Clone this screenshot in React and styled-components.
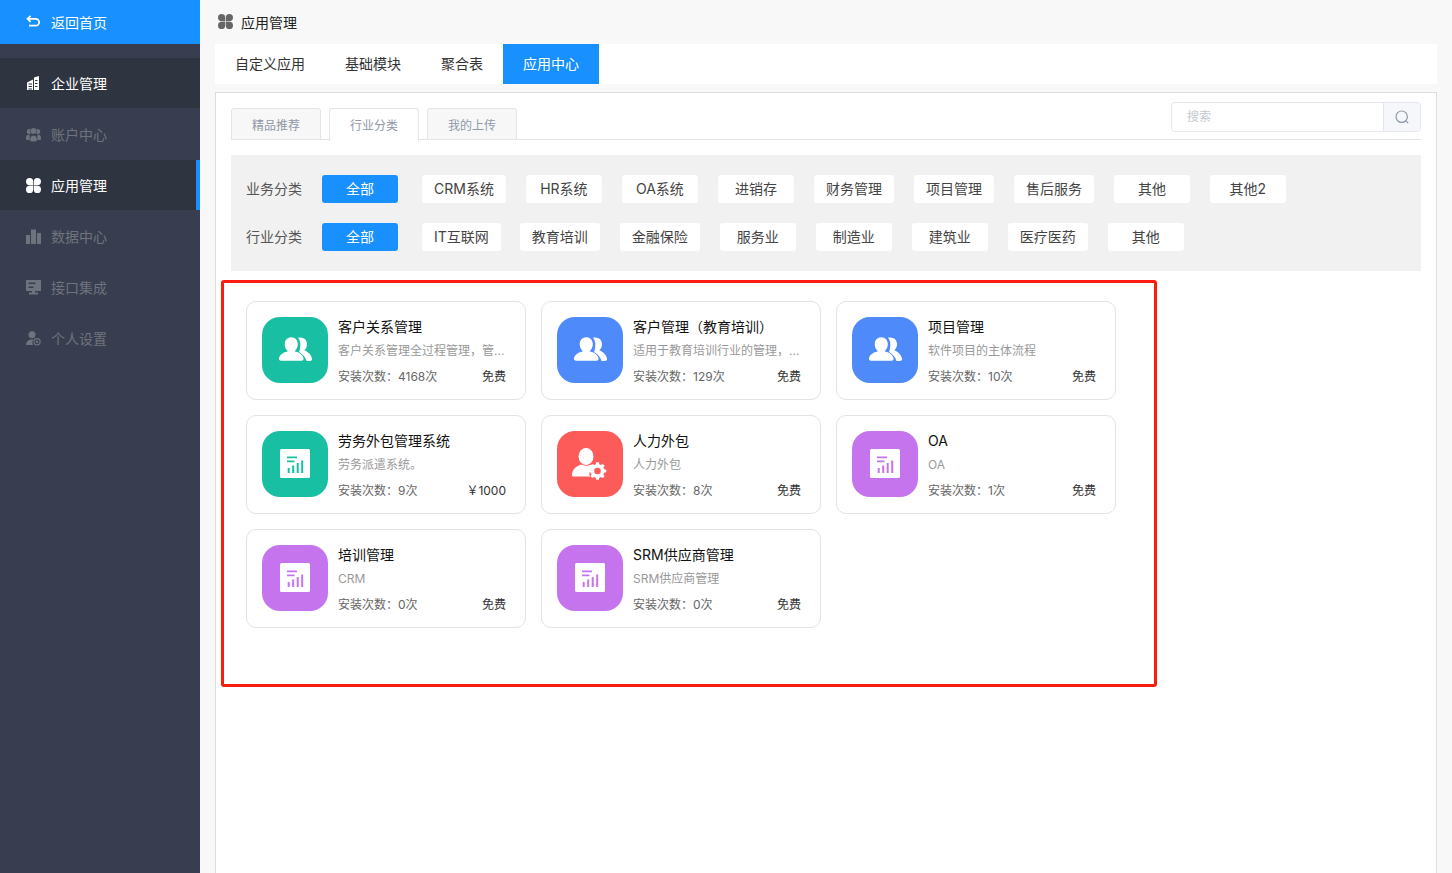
import React from 'react';
import styled, { createGlobalStyle } from 'styled-components';

const GlobalStyle = createGlobalStyle`
  * { box-sizing: border-box; }
  html, body { margin: 0; height: 100%; overflow: hidden; }
  body {
    background: #f8f8f8;
    font-family: Inter, "Noto Sans CJK SC", sans-serif;
    font-size: 14px;
  }
`;

const Page = styled.div`
  display: flex;
  height: 873px;
`;

const Sidebar = styled.aside`
  width: 200px;
  flex-shrink: 0;
  background: #383e4f;
`;

const BackRow = styled.div`
  height: 44px;
  margin-bottom: 14px;
  padding-left: 26px;
  display: flex;
  align-items: center;
  gap: 10px;
  background: #1890ff;
  color: #fff;
`;

const NavItem = styled.div`
  height: 50px;
  margin-bottom: 1px;
  padding-left: 26px;
  display: flex;
  align-items: center;
  gap: 10px;
  background: ${p => (p.$dark ? '#2f3441' : 'transparent')};
  color: ${p => (p.$dark ? '#fff' : '#6f737d')};
  border-right: 4px solid ${p => (p.$current ? '#1890ff' : 'transparent')};
`;

const Main = styled.main`
  flex: 1;
  min-width: 0;
  padding-left: 15px;
  padding-right: 15px;
`;

const Crumb = styled.div`
  height: 44px;
  display: flex;
  align-items: center;
  gap: 8px;
  padding-left: 3px;
  color: #222;
  svg { margin-top: -2px; }
`;

const TopTabs = styled.div`
  height: 40px;
  display: flex;
  background: #fff;
`;

const TopTab = styled.div`
  padding: 0 20px;
  line-height: 40px;
  color: ${p => (p.$active ? '#fff' : '#333')};
  background: ${p => (p.$active ? '#1890ff' : 'transparent')};
`;

const Panel = styled.section`
  margin-top: 8px;
  height: 800px;
  padding: 9px 15px 0;
  background: #fff;
  border: 1px solid #ddd;
`;

const TabLine = styled.div`
  height: 38px;
  display: flex;
  justify-content: space-between;
  align-items: flex-start;
  border-bottom: 1px solid #e4e4e4;
`;

const SubTabs = styled.div`
  display: flex;
  gap: 8px;
  padding-top: 6px;
`;

const SubTab = styled.div`
  width: 90px;
  height: ${p => (p.$active ? '33px' : '32px')};
  text-align: center;
  line-height: 34px;
  font-size: 12px;
  color: #8f98a8;
  background: ${p => (p.$active ? '#fff' : '#f7f7f7')};
  border: 1px solid #e4e4e4;
  border-bottom: ${p => (p.$active ? 'none' : '1px solid #e4e4e4')};
  border-radius: 3px 3px 0 0;
`;

const Search = styled.div`
  width: 250px;
  height: 30px;
  display: flex;
  border: 1px solid #e4e7ed;
  border-radius: 4px;
  overflow: hidden;
`;

const SearchInput = styled.div`
  flex: 1;
  padding-left: 15px;
  line-height: 28px;
  font-size: 12px;
  color: #c4c8d0;
`;

const SearchButton = styled.div`
  width: 37px;
  display: flex;
  align-items: center;
  justify-content: center;
  color: #8f98a8;
  background: #f5f7fa;
  border-left: 1px solid #e4e7ed;
`;

const Filters = styled.div`
  margin-top: 15px;
  height: 116px;
  padding: 20px 15px 0;
  display: flex;
  flex-direction: column;
  gap: 20px;
  background: #f1f1f1;
`;

const FilterRow = styled.div`
  display: flex;
  align-items: center;
`;

const FilterLabel = styled.div`
  width: 76px;
  height: 28px;
  line-height: 28px;
  color: #555;
`;

const Pill = styled.div`
  min-width: 76px;
  height: 28px;
  margin-right: ${p => p.$gap || 20}px;
  padding: 0 12px;
  text-align: center;
  line-height: 28px;
  border-radius: 3px;
  color: ${p => (p.$active ? '#fff' : '#444')};
  background: ${p => (p.$active ? '#1890ff' : '#fff')};
`;

const Highlight = styled.div`
  width: 936px;
  height: 407px;
  margin: 9px 0 0 -10px;
  padding: 18px 22px;
  border: 3px solid #fb1b10;
  border-radius: 3px;
`;

const CardGrid = styled.div`
  display: grid;
  grid-template-columns: repeat(3, 280px);
  grid-auto-rows: 99px;
  gap: 15px;
`;

const Card = styled.div`
  display: flex;
  gap: 10px;
  padding: 15px 19px 0 15px;
  border: 1px solid #e3e3e3;
  border-radius: 10px;
  background: #fff;
`;

const IconTile = styled.div`
  width: 66px;
  height: 66px;
  flex-shrink: 0;
  display: flex;
  align-items: center;
  justify-content: center;
  border-radius: 18px;
  background: ${p => p.$color};
`;

const CardBody = styled.div`
  flex: 1;
  min-width: 0;
`;

const CardTitle = styled.div`
  height: 20px;
  line-height: 20px;
  color: #111;
`;

const CardDesc = styled.div`
  margin-top: 4px;
  height: 20px;
  line-height: 20px;
  font-size: 12px;
  color: #999;
  white-space: nowrap;
`;

const CardMeta = styled.div`
  margin-top: 6px;
  display: flex;
  justify-content: space-between;
  line-height: 20px;
  font-size: 12px;
  color: #666;
`;

const Price = styled.span`
  color: #333;
`;

const BackIcon = () => (
  <svg width="15" height="15" viewBox="0 0 15 15" fill="none" stroke="currentColor" strokeWidth="1.7">
    <path d="M1.500 3.800h8.200a3.400 3.400 0 0 1 0 6.900H3" />
    <path d="M4.600.8 1.500 3.800l3.100 3" />
  </svg>
);

const BuildingIcon = () => (
  <svg width="15" height="15" viewBox="0 0 15 15" fill="currentColor">
    <path d="M1 6.500 7 3.500V14H1zM8 1.500 13 0V14H8z" />
    <path d="M2.500 7.500H6v1H2.500zM2.500 10H6v1H2.500zM2.500 12.500H6v1H2.500zM9 4h2.500v1H9zM9 7h2.500v1H9zM9 10h2.500v1H9z" fill="#2f3441" />
  </svg>
);

const TeamIcon = () => (
  <svg width="15" height="15" viewBox="0 0 15 15" fill="currentColor">
    <circle cx="3.300" cy="4.500" r="2.500" />
    <circle cx="11.700" cy="4.500" r="2.500" />
    <path d="M0 11c0-2.400 1.400-3.500 3.500-3.500L4 13H1c-.7 0-1-.5-1-2zM15 11c0-2.400-1.400-3.500-3.500-3.500L11 13h3c.7 0 1-.5 1-2z" />
    <circle cx="7.500" cy="4" r="3.300" stroke="#383e4f" strokeWidth=".6" />
    <path d="M3.800 13.500c-.4-3 1-5 3.700-5.200 2.700.2 4.100 2.200 3.700 5.200-.1.800-1 1.300-3.700 1.300s-3.600-.5-3.700-1.300z" stroke="#383e4f" strokeWidth=".6" />
  </svg>
);

const UsersGlyph = () => (
  <svg width="33" height="26" viewBox="0 0 33 26" fill="#fff">
    <path d="M19 .7C24 -.5 28 2.500 28 7c0 2.800-1.100 5-2.800 6.300 3.600 1.500 6.800 4 7.800 8.200.3 1.400-.5 2.500-1.900 2.500h-3.600c-1-3.900-3.800-7.300-7.500-9.100 1-1.900 1.300-4.500 1.300-7.900 0-2.700-1-4.800-2.300-6.300z" />
    <path d="M12.500.3c3.800 0 6.300 3 6.300 6.900 0 3-1.400 5.600-3.300 7 4.300 1 8 3 9 7 .3 1.500-.5 2.500-2 2.500H2c-1.500 0-2.300-1-2-2.500 1-4 4.700-6 9-7-1.900-1.400-3.300-4-3.300-7 0-3.900 2.500-6.900 6.800-6.900z" />
  </svg>
);

const CloverIcon = ({ color = 'currentColor' }) => (
  <svg width="15" height="15" viewBox="0 0 15 15" fill={color}>
    <path d="M3.600 0a3.600 3.600 0 0 1 3.600 3.600v3.600H3.600a3.600 3.600 0 0 1 0-7.200z" />
    <path d="M11.400 0a3.600 3.600 0 0 1 0 7.200H7.800V3.600A3.600 3.600 0 0 1 11.400 0z" />
    <path d="M3.600 7.800h3.600v3.600a3.600 3.600 0 1 1-3.600-3.600z" />
    <path d="M7.800 7.800h3.600a3.600 3.600 0 1 1-3.600 3.600z" />
  </svg>
);

const BarsIcon = () => (
  <svg width="15" height="15" viewBox="0 0 15 15" fill="currentColor">
    <path d="M0 6h4v9H0zM5 .5h5V15H5zM11 4h4v11h-4z" />
  </svg>
);

const ServerIcon = () => (
  <svg width="15" height="15" viewBox="0 0 15 15" fill="currentColor">
    <path fillRule="evenodd" d="M0 0h15v11H9v1.500h3V14.500H3v-2h3V11H0zM2.500 2.500V4h7V2.500zM2.500 6.500V8h5V6.500z" />
  </svg>
);

const PersonIcon = () => (
  <svg width="15" height="15" viewBox="0 0 15 15" fill="currentColor">
    <circle cx="6" cy="3.800" r="3.500" />
    <path d="M0 14c0-3 2-5 4.500-5.500h3a5 5 0 0 0-.5 5.500z" />
    <path fillRule="evenodd" d="M11 7a3.700 3.700 0 1 1 0 7.400A3.700 3.700 0 0 1 11 7zm0 1.200a2.500 2.500 0 1 0 0 5 2.500 2.500 0 0 0 0-5z" />
    <circle cx="11" cy="10.700" r="1.200" />
  </svg>
);

const ChartTile = ({ color }) => (
  <svg width="30" height="30" viewBox="0 0 30 30">
    <rect width="30" height="29" rx="1.500" fill="#fff" />
    <path d="M7 7.500h10v1.800H7zM7 11.500h7.500v1.800H7z" fill={color} />
    <path d="M7.700 19h2v5h-2zM12.200 16.500h2V24h-2zM16.700 14h2v10h-2zM21.200 11.500h2V24h-2z" fill={color} />
  </svg>
);

const PersonGear = () => (
  <svg width="36" height="34" viewBox="0 0 36 34" fill="#fff">
    <g transform="translate(0 1)">
      <ellipse cx="14" cy="8.500" rx="7.500" ry="8.500" />
      <path d="M0 27c.3-6 4.500-9 9-10.500 3 1.500 6.500 1.500 9.500.2 1 .4 2 .9 2.800 1.500-3.400 2.600-4.800 6.500-3.300 10.300H1.500C.5 28.500 0 28 0 27z" />
    </g>
    <path
      fillRule="evenodd"
      d="M25.500 12.500h3l.5 2.300 1.800.8 2-1.300 2.100 2.100-1.300 2 .8 1.800 2.300.5v3l-2.300.5-.8 1.800 1.300 2-2.100 2.100-2-1.300-1.800.8-.5 2.300h-3l-.5-2.300-1.800-.8-2 1.300-2.100-2.100 1.300-2-.8-1.800-2.300-.5v-3l2.300-.5.8-1.800-1.300-2 2.100-2.100 2 1.300 1.800-.8zM27 18.500a3.700 3.700 0 1 0 0 7.400 3.700 3.700 0 0 0 0-7.400z"
      transform="translate(25.500 24) scale(.9) translate(-27 -22.200)"
    />
  </svg>
);

const SearchIcon = () => (
  <svg width="16" height="16" viewBox="0 0 16 16" fill="none" stroke="currentColor" strokeWidth="1.200">
    <circle cx="7.700" cy="7.700" r="5.700" />
    <path d="m12 12 2.200 2.200" />
  </svg>
);

const navItems = [
  { label: '企业管理', icon: <BuildingIcon />, dark: true },
  { label: '账户中心', icon: <TeamIcon /> },
  { label: '应用管理', icon: <CloverIcon />, dark: true, current: true },
  { label: '数据中心', icon: <BarsIcon /> },
  { label: '接口集成', icon: <ServerIcon /> },
  { label: '个人设置', icon: <PersonIcon /> },
];

const businessTags = ['CRM系统', 'HR系统', 'OA系统', '进销存', '财务管理', '项目管理', '售后服务', '其他', '其他2'];
const industryTags = ['IT互联网', '教育培训', '金融保险', '服务业', '制造业', '建筑业', '医疗医药', '其他'];

const GREEN = '#19bfa3';
const BLUE = '#4e8afa';
const RED = '#fd5a5a';
const PURPLE = '#c674ee';

const apps = [
  { title: '客户关系管理', desc: '客户关系管理全过程管理，管...', count: '4168次', price: '免费', color: GREEN, kind: 'users' },
  { title: '客户管理（教育培训）', desc: '适用于教育培训行业的管理，...', count: '129次', price: '免费', color: BLUE, kind: 'users' },
  { title: '项目管理', desc: '软件项目的主体流程', count: '10次', price: '免费', color: BLUE, kind: 'users' },
  { title: '劳务外包管理系统', desc: '劳务派遣系统。', count: '9次', price: '￥1000', color: GREEN, kind: 'chart' },
  { title: '人力外包', desc: '人力外包', count: '8次', price: '免费', color: RED, kind: 'gear' },
  { title: 'OA', desc: 'OA', count: '1次', price: '免费', color: PURPLE, kind: 'chart' },
  { title: '培训管理', desc: 'CRM', count: '0次', price: '免费', color: PURPLE, kind: 'chart' },
  { title: 'SRM供应商管理', desc: 'SRM供应商管理', count: '0次', price: '免费', color: PURPLE, kind: 'chart' },
];

const AppIcon = ({ kind, color }) => {
  if (kind === 'users') return <UsersGlyph />;
  if (kind === 'gear') return <PersonGear />;
  return <ChartTile color={color} />;
};

const App = () => (
  <Page>
    <GlobalStyle />
    <Sidebar>
      <BackRow><BackIcon />返回首页</BackRow>
      {navItems.map(item => (
        <NavItem key={item.label} $dark={item.dark} $current={item.current}>
          {item.icon}
          {item.label}
        </NavItem>
      ))}
    </Sidebar>
    <Main>
      <Crumb><CloverIcon color="#666" />应用管理</Crumb>
      <TopTabs>
        <TopTab>自定义应用</TopTab>
        <TopTab>基础模块</TopTab>
        <TopTab>聚合表</TopTab>
        <TopTab $active>应用中心</TopTab>
      </TopTabs>
      <Panel>
        <TabLine>
          <SubTabs>
            <SubTab>精品推荐</SubTab>
            <SubTab $active>行业分类</SubTab>
            <SubTab>我的上传</SubTab>
          </SubTabs>
          <Search>
            <SearchInput>搜索</SearchInput>
            <SearchButton><SearchIcon /></SearchButton>
          </Search>
        </TabLine>
        <Filters>
          <FilterRow>
            <FilterLabel>业务分类</FilterLabel>
            <Pill $active $gap={24}>全部</Pill>
            {businessTags.map(t => <Pill key={t}>{t}</Pill>)}
          </FilterRow>
          <FilterRow>
            <FilterLabel>行业分类</FilterLabel>
            <Pill $active $gap={24}>全部</Pill>
            {industryTags.map(t => <Pill key={t} $gap={t === 'IT互联网' ? 19 : 20}>{t}</Pill>)}
          </FilterRow>
        </Filters>
        <Highlight>
          <CardGrid>
            {apps.map(app => (
              <Card key={app.title}>
                <IconTile $color={app.color}>
                  <AppIcon kind={app.kind} color={app.color} />
                </IconTile>
                <CardBody>
                  <CardTitle>{app.title}</CardTitle>
                  <CardDesc>{app.desc}</CardDesc>
                  <CardMeta>
                    <span>安装次数：{app.count}</span>
                    <Price>{app.price}</Price>
                  </CardMeta>
                </CardBody>
              </Card>
            ))}
          </CardGrid>
        </Highlight>
      </Panel>
    </Main>
  </Page>
);

export default App;
